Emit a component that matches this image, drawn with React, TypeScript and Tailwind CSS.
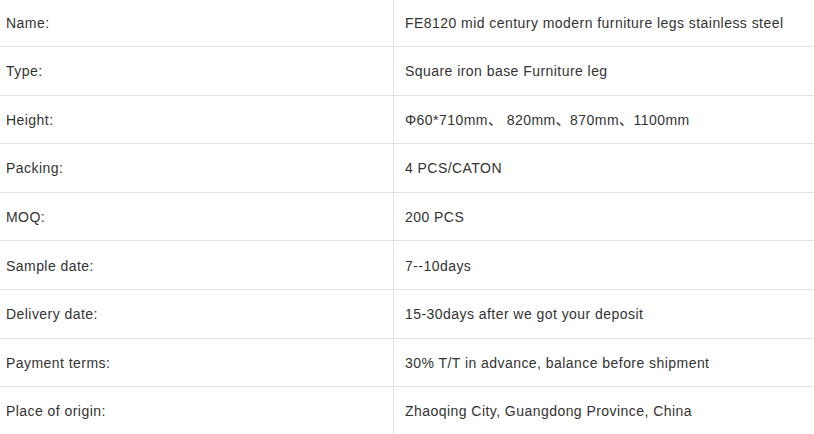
import React from "react";

const rows: [string, string][] = [
  ["Name:", "FE8120 mid century modern furniture legs stainless steel"],
  ["Type:", "Square iron base Furniture leg"],
  ["Height:", "Φ60*710mm、 820mm、870mm、1100mm"],
  ["Packing:", "4 PCS/CATON"],
  ["MOQ:", "200 PCS"],
  ["Sample date:", "7--10days"],
  ["Delivery date:", "15-30days after we got your deposit"],
  ["Payment terms:", "30% T/T in advance, balance before shipment"],
  ["Place of origin:", "Zhaoqing City, Guangdong Province, China"],
];

export default function App() {
  return (
    <div className="w-[814px] h-[434px] overflow-hidden bg-white text-[14px] tracking-[0.45px] text-[#333333] [font-family:'Liberation_Sans','Noto_Sans_CJK_SC',Arial,sans-serif]">
      <div className="-mt-[1.6px]">
        {rows.map(([k, v], i) => (
          <div key={i} className="flex h-[48.6px] border-b border-[#e3e3e3]">
            <div className="w-[394px] shrink-0 flex items-center pl-[6px] pt-[2px] border-r border-[#e3e3e3]">
              {k}
            </div>
            <div className="flex-1 flex items-center pl-[11px] pt-[2px]">{v}</div>
          </div>
        ))}
      </div>
    </div>
  );
}
